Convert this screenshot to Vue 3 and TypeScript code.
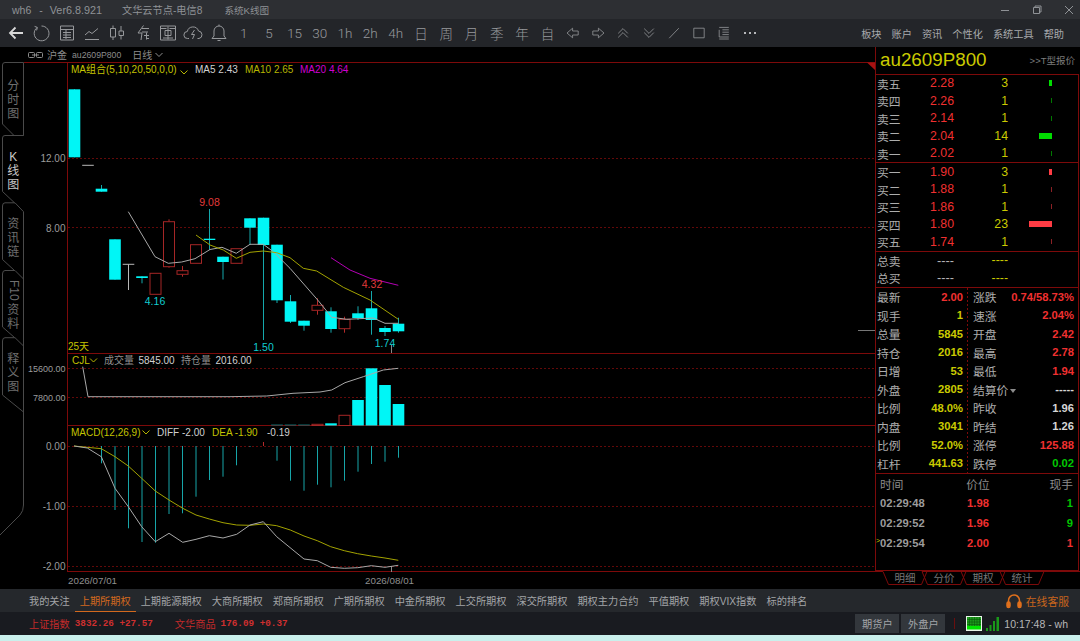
<script setup lang="ts">
type Candle = [number, number, number, number, 'c' | 'r' | 'g']

const step = 13.5
const cx = (i: number) => 74.5 + step * i

// top, bottom, high, low of each daily candle in chart pixels
const candles: Candle[] = [
  [89.3, 157.3, 89.3, 157.3, 'c'],
  [165.3, 165.3, 165.3, 165.3, 'g'],
  [188.7, 191.7, 185, 191.7, 'c'],
  [239.3, 279.7, 239.3, 279.7, 'c'],
  [264.3, 264.3, 264.3, 290, 'g'],
  [276.3, 278, 276.3, 283.3, 'c'],
  [273.3, 294.3, 273.3, 294.3, 'r'],
  [221.7, 266.7, 219.3, 267.7, 'r'],
  [270.7, 274.3, 266, 276.7, 'r'],
  [244.7, 263.3, 244.7, 263.3, 'r'],
  [238.7, 240, 209, 250, 'c'],
  [256.7, 262, 256.7, 279.5, 'c'],
  [248.7, 263.3, 248.7, 263.3, 'r'],
  [218.3, 227.7, 218.3, 245, 'c'],
  [217.7, 245, 217.7, 340, 'c'],
  [244.7, 300.3, 244.7, 303, 'c'],
  [301.3, 321.7, 295, 323, 'c'],
  [320.7, 325.7, 320.7, 330.7, 'c'],
  [305.3, 310.3, 298.3, 314.7, 'r'],
  [311.3, 329, 307.3, 332.7, 'c'],
  [319.3, 328.7, 316.7, 332.7, 'r'],
  [313.3, 318, 306.3, 320, 'c'],
  [308.3, 320, 291, 334.7, 'c'],
  [328, 332, 326, 336, 'c'],
  [323.7, 331.3, 317.7, 332.7, 'c'],
]

const ma5 = '128.3,211.7 155,256.7 168.3,263.3 181.7,262 195,258.7 210,249.5 222,247.3 236.3,253.3 250,244.3 263.3,244.3 273.3,251.7 290,268.3 318.3,300.7 331.7,317.3 346.7,319.3 373.3,318 385,323.3 398.3,323.3'
const ma10 = '196,235 210,245 223.3,250 236.3,258.3 250,252.3 263.3,251 276.7,252.7 290,257.7 303.3,268.3 316.7,271 343.3,287.3 370,300 398.3,319.3'
const ma20 = '331,257.7 350,270 370,278.3 398.3,285.3'
const volLine = '82.7,366.7 88,396.7 230,396.7 266.7,396 293,393.3 320,392 331.7,390 345,382.7 363.3,376.7 383.3,370 398.3,368.3'
const diff = '74,446 87.3,448 101.3,456.7 115,488.3 128.3,506.7 141.7,526.7 155.3,541.7 169,533.3 182.7,542.3 196,539.3 209.3,535.7 223,538 236.7,534.3 250,525 263.3,521.7 276.7,536.7 304,559 317.3,560.7 330.7,567.3 344.3,568.3 357.7,567.7 371.3,565.7 385,567.3 398.3,565.3'
const dea = '74,446 101.3,448.7 115,456.7 128.3,466 141.7,478.3 155.3,491 169,500 182.7,508.3 196,515 209.3,519 223,522.7 236.7,525 250,525.3 263.3,524 276.7,525.7 290.3,530 304,536 317.3,540.7 330.7,546.7 344.3,550.7 357.7,553.7 371.3,556 385,558 398.3,560.3'

const volBars: { i: number; top: number; kind: 'c' | 'r' | 't' }[] = [
  { i: 15, top: 424.5, kind: 't' },
  { i: 16, top: 424.5, kind: 't' },
  { i: 17, top: 424.5, kind: 't' },
  { i: 18, top: 424.3, kind: 'r' },
  { i: 19, top: 423.3, kind: 'c' },
  { i: 20, top: 415.3, kind: 'r' },
  { i: 21, top: 400, kind: 'c' },
  { i: 22, top: 368.3, kind: 'c' },
  { i: 23, top: 385, kind: 'c' },
  { i: 24, top: 404, kind: 'c' },
]

// bottom end of each MACD stick, first one sits at candle index 2
const macd = [463.3, 510, 528.3, 542, 542.7, 514, 513.3, 496.7, 480, 476.7, 465.3, 446.9, 442, 460.7, 480.7, 490.7, 484.7, 487.3, 480.7, 471.7, 464, 461.7, 457.7]

const toolIcons = [
  'M17 10H4M9.5 4.5 4 10l5.5 5.5',
  'M6 4.6A7.4 7.4 0 1 0 10.5 3M3.6 3.4 6.4 4.4 5.6 7.4',
  'M3.5 3h13v14h-13zM3.5 6.5h13M6 9.5h8M6 12h8M6 14.5h8M9 7v9',
  'M3 16.5h14M3 12l4-3.5 3 2 6-5',
  'M6 2.5v3M6 14v3M3.5 5.5h5V14h-5zM14 3v5M14 12.5v4M12 8h4.5v4.5H12z',
  'M10.5 2.5 5 10h4l-1 7M9 5.5h7M9 9h6M11 12.5h5M13 15.5h3M13.5 9.5v7',
  'M2.5 3h15v14h-15zM2.5 5.5h6M11.5 5.5h6M10 3.5v13M7 7.5h6v5H7zM5 15h10',
  'M6 15.5H4.5A3.5 3.5 0 0 1 4.3 8.5 5.8 5.8 0 0 1 15.5 8a3.8 3.8 0 0 1 .5 7.5h-1.5M11.5 7 8.5 11.5h3l-2 4.5',
  'M10 3a5 5 0 0 1 5 5v5l2 2.5H3L5 13V8a5 5 0 0 1 5-5zM8.5 17.5h3M10 1.5V3',
]
const toolTexts = ['1', '5', '15', '30', '1h', '2h', '4h', '日', '周', '月', '季', '年', '自']
const toolIcons2 = [
  'M2.5 10 9.5 4v3.5h7v5h-7V16z',
  'M17.5 10 10.5 4v3.5h-7v5h7V16z',
  'M4 10.5 10 4.5l6 6M4 15.5l6-6 6 6',
  'M4 4.5l6 6 6-6M4 9.5l6 6 6-6',
  'M4 16.5 16 4',
  'M3.5 4h13v12h-13z',
  'M4 3h12M8 6h8M8 9h8M8 12h8M4 15h12M4 17.5h12M4 6v9',
]
const menus = ['板块', '账户', '资讯', '个性化', '系统工具', '帮助']

const railTabs = [
  { label: ['分', '时', '图'], h: 74 },
  { label: ['K', '线', '图'], h: 67, active: true },
  { label: ['资', '讯', '链'], h: 67.5 },
  { label: ['F10', '资', '料'], h: 67.5, turned: true },
  { label: ['释', '义', '图'], h: 68 },
]

const asks = [
  ['卖五', '2.28', '3', 3, 6],
  ['卖四', '2.26', '1', 1, 5],
  ['卖三', '2.14', '1', 1, 5],
  ['卖二', '2.04', '14', 13.5, 6],
  ['卖一', '2.02', '1', 1, 5],
] as const
const bids = [
  ['买一', '1.90', '3', 3, 6],
  ['买二', '1.88', '1', 1, 5],
  ['买三', '1.86', '1', 1, 5],
  ['买四', '1.80', '23', 23, 6],
  ['买五', '1.74', '1', 1, 5],
] as const

const stats = [
  ['最新', '2.00', 'red', '涨跌', '0.74/58.73%', 'red'],
  ['现手', '1', 'yel', '速涨', '2.04%', 'red'],
  ['总量', '5845', 'yel', '开盘', '2.42', 'red'],
  ['持仓', '2016', 'yel', '最高', '2.78', 'red'],
  ['日增', '53', 'yel', '最低', '1.94', 'red'],
  ['外盘', '2805', 'yel', '结算价', '-----', 'wht'],
  ['比例', '48.0%', 'yel', '昨收', '1.96', 'wht'],
  ['内盘', '3041', 'yel', '昨结', '1.26', 'wht'],
  ['比例', '52.0%', 'yel', '涨停', '125.88', 'red'],
  ['杠杆', '441.63', 'yel', '跌停', '0.02', 'grn'],
]

const trades = [
  { time: '02:29:48', price: '1.98', hand: '1', cls: 'grn' },
  { time: '02:29:52', price: '1.96', hand: '9', cls: 'grn' },
  { time: '02:29:54', price: '2.00', hand: '1', cls: 'red', now: true },
]

const miniTabs = [
  { x: 883, label: '明细', active: true },
  { x: 922, label: '分价' },
  { x: 961, label: '期权' },
  { x: 1000, label: '统计' },
]

const bottomTabs = ['我的关注', '上期所期权', '上期能源期权', '大商所期权', '郑商所期权', '广期所期权', '中金所期权', '上交所期权', '深交所期权', '期权主力合约', '平值期权', '期权VIX指数', '标的排名']
</script>

<template>
  <div class="app">
    <header class="titlebar">
      <span class="t-name">wh6</span>
      <span class="t-dash">-</span>
      <span class="t-ver">Ver6.8.921</span>
      <span class="t-node">文华云节点-电信8</span>
      <span class="t-page">系统K线图</span>
      <div class="win">
        <svg width="10" height="10" viewBox="0 0 10 10"><path d="M1 5.5h8" /></svg>
        <svg width="10" height="10" viewBox="0 0 10 10"><path d="M1.5 2.5h6v6h-6zM3 2.5V1h6v6H7.5" /></svg>
        <svg width="10" height="10" viewBox="0 0 10 10"><path d="M1 1l8 8M9 1l-8 8" /></svg>
      </div>
    </header>

    <nav class="toolbar">
      <span v-for="(d, i) in toolIcons" :key="'a' + i" class="tool">
        <svg width="20" height="20" viewBox="0 0 20 20"><path :d="d" /></svg>
      </span>
      <span v-for="t in toolTexts" :key="t" class="tool tool-text">{{ t }}</span>
      <span v-for="(d, i) in toolIcons2" :key="'b' + i" class="tool small">
        <svg width="16" height="16" viewBox="0 0 20 20"><path :d="d" /></svg>
      </span>
      <span class="tool dots"><i /><i /><i /></span>
      <div class="menus">
        <span v-for="m in menus" :key="m">{{ m }}</span>
      </div>
    </nav>

    <div class="body">
      <div class="left">
        <div class="subhead">
          <svg width="15" height="8" viewBox="0 0 15 8" class="link">
            <rect x="0.5" y="1.5" width="6" height="5" rx="1" />
            <rect x="8.5" y="1.5" width="6" height="5" rx="1" />
            <path d="M4 4h7" />
          </svg>
          <span class="sub-ex">沪金</span>
          <span class="sub-code">au2609P800</span>
          <span class="sub-period">日线</span>
          <svg width="8" height="6" viewBox="0 0 8 6" class="chev"><path d="M.5 1 4 4.5 7.5 1" /></svg>
        </div>

        <div class="chart-row">
          <aside class="rail">
            <svg class="rail-lines" width="24" height="527" viewBox="0 62 24 527">
              <path d="M2.5 65Q2.5 62.5 5 62.5H23.5V135.5H14L2.5 124V65" />
              <path d="M23.5 135.5H5Q2.5 135.5 2.5 138V191.5L14.5 202.8" />
              <path d="M2.5 259.5V206Q2.5 202.8 5 202.8H15L23.5 211.7V505Q23.5 511 20 515L0 535" />
              <path d="M2.5 259.5 14.5 270.5M2.5 327V274Q2.5 270.5 5 270.5H15L23.5 279" />
              <path d="M2.5 327 14.5 337.5M2.5 395V341Q2.5 337.7 5 337.7H15L23.5 346M2.5 395 23.5 412" />
            </svg>
            <div
              v-for="tab in railTabs"
              :key="tab.label.join('')"
              class="rail-tab"
              :class="{ active: tab.active }"
              :style="{ height: tab.h + 'px' }"
            >
              <span
                v-for="(c, i) in tab.label"
                :key="i"
                :class="{ turned: tab.turned && i === 0 }"
              >{{ c }}</span>
            </div>
          </aside>

          <svg class="chart" width="851" height="527" viewBox="24 62 851 527">
            <!-- grid -->
            <g class="dash">
              <path d="M68 158.5H875M68 227.5H875M68 368.5H875M68 397.5H875M68 446.5H875M68 506.5H875M68 566.5H875" />
            </g>
            <g class="frame">
              <path d="M24 62.5H875M67.5 62V572M68 353.5H875M68 425.5H875M68 571.5H875" />
            </g>
            <path d="M867 62.5H875V70z" fill="#a81212" />
            <path d="M858 330.5H875" stroke="#777" fill="none" />

            <!-- price panel -->
            <g v-for="(c, i) in candles" :key="i">
              <template v-if="c[4] === 'c'">
                <path :d="`M${cx(i)} ${c[2]}V${c[3]}`" class="wick" />
                <rect :x="cx(i) - 5.8" :y="c[0]" width="11.6" :height="Math.max(c[1] - c[0], 1)" fill="#00f6f6" />
              </template>
              <template v-else-if="c[4] === 'r'">
                <path :d="`M${cx(i)} ${c[2]}V${c[0]}M${cx(i)} ${c[1]}V${c[3]}`" class="wick-red" />
                <rect :x="cx(i) - 5.5" :y="c[0]" width="11" :height="c[1] - c[0]" class="hollow" />
              </template>
              <template v-else>
                <path :d="`M${cx(i) - 5.8} ${c[0]}H${cx(i) + 5.8}M${cx(i)} ${c[0]}V${c[3]}`" class="wick-gray" />
              </template>
            </g>
            <polyline :points="ma5" class="line gray" />
            <polyline :points="ma10" class="line olive" />
            <polyline :points="ma20" class="line magenta" />
            <path d="M391.5 345V353M391.5 566V572" stroke="#888" fill="none" />

            <text x="155" y="305" class="lbl mid cyan">4.16</text>
            <text x="209.5" y="206" class="lbl mid red">9.08</text>
            <text x="263.5" y="351" class="lbl mid cyan">1.50</text>
            <text x="372" y="288" class="lbl mid red">4.32</text>
            <text x="385" y="346.5" class="lbl mid cyan">1.74</text>
            <text x="68" y="349.5" class="lbl yellow">25天</text>

            <text x="71" y="73" class="lbl yellow">MA组合(5,10,20,50,0,0)</text>
            <path d="M180.5 70.5 184 74 187.5 70.5" class="chev-line" />
            <text x="195" y="73" class="lbl white">MA5 2.43</text>
            <text x="245" y="73" class="lbl olive-t">MA10 2.65</text>
            <text x="300" y="73" class="lbl magenta-t">MA20 4.64</text>

            <!-- axis -->
            <text x="65.5" y="162" class="axis">12.00</text>
            <text x="65.5" y="231.5" class="axis">8.00</text>
            <text x="65.5" y="371.5" class="axis sm">15600.00</text>
            <text x="65.5" y="400.5" class="axis sm">7800.00</text>
            <text x="65.5" y="450" class="axis">0.00</text>
            <text x="65.5" y="510" class="axis">-1.00</text>
            <text x="65.5" y="570" class="axis">-2.00</text>

            <!-- volume panel -->
            <text x="72" y="364" class="lbl yellow">CJL</text>
            <path d="M90 358.5 93.5 362 97 358.5" class="chev-line" />
            <text x="104" y="364" class="lbl dim">成交量</text>
            <text x="138.5" y="364" class="lbl white">5845.00</text>
            <text x="181" y="364" class="lbl dim">持仓量</text>
            <text x="215.5" y="364" class="lbl white">2016.00</text>
            <g v-for="b in volBars" :key="b.i">
              <rect
                v-if="b.kind === 'r'"
                :x="cx(b.i) - 5.5"
                :y="b.top"
                width="11"
                :height="425.5 - b.top"
                class="hollow"
              />
              <rect
                v-else
                :x="cx(b.i) - 5.8"
                :y="b.top"
                width="11.6"
                :height="425.5 - b.top"
                :fill="b.kind === 'c' ? '#00f6f6' : '#0e6f70'"
              />
            </g>
            <polyline :points="volLine" class="line gray" />

            <!-- macd panel -->
            <text x="71" y="436" class="lbl yellow">MACD(12,26,9)</text>
            <path d="M142.5 430.5 146 434 149.5 430.5" class="chev-line" />
            <text x="157" y="436" class="lbl white">DIFF -2.00</text>
            <text x="212" y="436" class="lbl yellow">DEA -1.90</text>
            <text x="267" y="436" class="lbl white">-0.19</text>
            <path
              v-for="(y, i) in macd"
              :key="i"
              :d="`M${cx(i + 2)} 446V${y}`"
              :class="y < 446 ? 'stick-red' : 'stick'"
            />
            <polyline :points="dea" class="line olive" />
            <polyline :points="diff" class="line gray" />

            <text x="68" y="584" class="lbl dim date">2026/07/01</text>
            <text x="365" y="584" class="lbl dim date">2026/08/01</text>
          </svg>
        </div>
      </div>

      <aside class="quote">
        <div class="q-title">
          <span class="q-code">au2609P800</span>
          <span class="q-link">&gt;&gt;T型报价</span>
        </div>

        <div class="q-box">
          <section class="book">
            <div v-for="r in asks" :key="r[0]" class="b-row">
              <span class="lab">{{ r[0] }}</span>
              <span class="b-price">{{ r[1] }}</span>
              <span class="b-qty">{{ r[2] }}</span>
              <span class="b-bar"><i class="bar-g" :class="{ thin: r[3] === 1 }" :style="{ width: r[3] + 'px', height: r[4] + 'px' }" /></span>
            </div>
          </section>
          <section class="book">
            <div v-for="r in bids" :key="r[0]" class="b-row">
              <span class="lab">{{ r[0] }}</span>
              <span class="b-price">{{ r[1] }}</span>
              <span class="b-qty">{{ r[2] }}</span>
              <span class="b-bar"><i class="bar-r" :class="{ thin: r[3] === 1 }" :style="{ width: r[3] + 'px', height: r[4] + 'px' }" /></span>
            </div>
          </section>
          <section class="book totals">
            <div class="b-row">
              <span class="lab">总卖</span><span class="b-price gr">----</span><span class="b-qty">----</span>
            </div>
            <div class="b-row">
              <span class="lab">总买</span><span class="b-price gr">----</span><span class="b-qty">----</span>
            </div>
          </section>

          <section class="stats">
            <div v-for="(s, i) in stats" :key="i" class="s-row">
              <div class="s-cell s-left">
                <span class="lab">{{ s[0] }}</span>
                <b :class="s[2]">{{ s[1] }}</b>
              </div>
              <div class="s-cell s-right">
                <span class="lab">{{ s[3] }}<i v-if="s[3] === '结算价'" class="caret" /></span>
                <b :class="s[5]">{{ s[4] }}</b>
              </div>
            </div>
          </section>

          <section class="trades">
            <div class="t-row t-head">
              <span>时间</span><span class="t-mid">价位</span><span class="t-end">现手</span>
            </div>
            <div v-for="t in trades" :key="t.time" class="t-row">
              <b class="t-time"><i v-if="t.now" class="now">&gt;</i>{{ t.time }}</b>
              <b class="t-mid red">{{ t.price }}</b>
              <b class="t-end" :class="t.cls">{{ t.hand }}</b>
            </div>
          </section>
        </div>

        <svg class="mini" width="205" height="15" viewBox="875 571 205 15">
          <path d="M875 571.5H883M1043 571.5H1080" class="mini-line" />
          <g v-for="m in miniTabs" :key="m.x">
            <path
              :d="`M${m.x} 571.5L${m.x + 5.5} 584.5H${m.x + 38.5}L${m.x + 44} 571.5${m.active ? '' : 'Z'}`"
              class="mini-line"
            />
            <text :x="m.x + 22" y="582" class="mini-text">{{ m.label }}</text>
          </g>
        </svg>
      </aside>
    </div>

    <div class="tabbar">
      <span v-for="(t, i) in bottomTabs" :key="t" class="bt" :class="{ on: i === 1 }">{{ t }}</span>
      <div class="service">
        <svg width="16" height="16" viewBox="0 0 16 16">
          <path d="M2.5 10V7.5a5.5 5.5 0 0 1 11 0V10" fill="none" />
          <rect x="1" y="9" width="3" height="5.5" rx="1.5" />
          <rect x="12" y="9" width="3" height="5.5" rx="1.5" />
        </svg>
        <span>在线客服</span>
      </div>
    </div>

    <footer class="status">
      <span class="idx">上证指数</span>
      <span class="num">3832.26 +27.57</span>
      <span class="idx idx2">文华商品</span>
      <span class="num">176.09 +0.37</span>
      <div class="st-right">
        <span class="acct">期货户</span>
        <span class="acct">外盘户</span>
        <i class="st-sep" />
        <svg width="16" height="15" viewBox="0 0 16 15" class="net">
          <rect width="16" height="15" fill="#e8f5e8" />
          <rect x="1" y="1" width="14" height="9" fill="#1c9a1c" />
          <path d="M1 3.5h14M1 6h14M1 8.5h14M3.5 1v9M6 1v9M8.5 1v9M11 1v9M13.5 1v9" stroke="#0a5a0a" stroke-width=".6" />
          <rect x="1" y="10" width="14" height="3.5" fill="#00e600" />
        </svg>
        <svg width="13" height="14" viewBox="0 0 13 14" class="signal">
          <rect x="0" y="11" width="2" height="3" fill="#1a9a1a" />
          <rect x="3.5" y="8" width="2" height="6" fill="#1a9a1a" />
          <rect x="7" y="4" width="2" height="10" fill="#1a9a1a" />
          <rect x="10.5" y="0" width="2.5" height="14" fill="#1a9a1a" />
        </svg>
        <span class="clock">10:17:48 - wh</span>
      </div>
    </footer>
    <div class="strip" />
  </div>
</template>

<style>
html,
body {
  margin: 0;
  background: #000;
  overflow: hidden;
}
</style>

<style scoped>
.app {
  width: 1080px;
  height: 641px;
  display: flex;
  flex-direction: column;
  overflow: hidden;
  background: #000;
  font-family: "Liberation Sans", "Noto Sans CJK SC", sans-serif;
  color: #aaa;
}

/* title bar */
.titlebar {
  height: 19px;
  flex: none;
  display: flex;
  align-items: center;
  background: #2d2f33;
  color: #8f9296;
  font-size: 10.5px;
  padding-left: 12px;
}
.t-dash {
  margin-left: 8px;
}
.t-ver {
  margin-left: 7px;
  font-size: 10.8px;
}
.t-node {
  margin-left: 20px;
  font-size: 10.2px;
}
.t-page {
  margin-left: 22px;
  font-size: 9.6px;
}
.win {
  margin-left: auto;
  display: flex;
  gap: 22px;
  padding-right: 6px;
}
.win svg {
  fill: none;
  stroke: #8f9296;
  stroke-width: 1;
}

/* toolbar */
.toolbar {
  height: 28px;
  flex: none;
  display: flex;
  align-items: center;
  background: #232529;
  padding-left: 3.5px;
}
.tool {
  width: 25.3px;
  flex: none;
  display: flex;
  justify-content: center;
  align-items: center;
}
.tool svg {
  fill: none;
  stroke: #96989b;
  stroke-width: 1;
}
.tool:first-child svg {
  stroke: #d8d8d8;
  stroke-width: 1.8;
}
.tool-text {
  font-family: Roboto, "Noto Sans CJK SC", sans-serif;
  font-size: 13.5px;
  font-weight: 300;
  color: #989a9d;
}
.dots {
  gap: 2.5px;
}
.dots i {
  width: 2.5px;
  height: 2.5px;
  background: #b5b7ba;
}
.menus {
  margin-left: auto;
  display: flex;
  gap: 10px;
  padding-right: 16px;
  font-size: 10.2px;
  color: #a8aaad;
}

/* body */
.body {
  height: 542px;
  flex: none;
  display: flex;
  background: #000;
}
.left {
  width: 875px;
  flex: none;
}
.subhead {
  height: 15px;
  display: flex;
  align-items: center;
  padding-left: 28px;
  font-size: 10px;
  color: #8c8c8c;
}
.link {
  fill: none;
  stroke: #8c8c8c;
}
.sub-ex {
  margin-left: 4px;
}
.sub-code {
  margin-left: 5px;
  font-size: 8.7px;
}
.sub-period {
  margin-left: 11px;
}
.chev {
  margin-left: 3px;
  fill: none;
  stroke: #8c8c8c;
}
.chart-row {
  display: flex;
  height: 527px;
}
.rail {
  width: 24px;
  flex: none;
  position: relative;
  padding-left: 2.6px;
  box-sizing: border-box;
}
.rail-lines {
  position: absolute;
  left: 0;
  top: 0;
  fill: none;
  stroke: #4a4a4a;
}
.rail-tab {
  display: flex;
  flex-direction: column;
  align-items: center;
  justify-content: center;
  padding-top: 2px;
  font-size: 12px;
  line-height: 14px;
  color: #6f6f6f;
  box-sizing: border-box;
}
.rail-tab.active {
  color: #c8c8c8;
}
.turned {
  writing-mode: vertical-rl;
  line-height: 13px;
  margin-bottom: 2px;
}
.chart {
  display: block;
  flex: none;
  font-family: "Liberation Sans", "Noto Sans CJK SC", sans-serif;
}
.dash path {
  fill: none;
  stroke: #620909;
  stroke-dasharray: 2 2;
}
.frame path {
  fill: none;
  stroke: #7d0a0a;
}
.wick {
  stroke: #15a8ac;
  fill: none;
}
.wick-red {
  stroke: #b52a2a;
  fill: none;
}
.wick-gray {
  stroke: #b8b8b8;
  fill: none;
}
.hollow {
  fill: #000;
  stroke: #a52626;
}
.line {
  fill: none;
  stroke-width: 1;
}
.gray {
  stroke: #a8a8a8;
}
.olive {
  stroke: #a3a300;
}
.magenta {
  stroke: #b400b4;
}
.stick {
  stroke: #17a5a8;
  fill: none;
}
.stick-red {
  stroke: #b52a2a;
  fill: none;
}
.lbl {
  font-size: 10px;
}
.mid {
  text-anchor: middle;
  font-size: 10.5px;
}
.cyan {
  fill: #11cdd0;
}
.lbl.red {
  fill: #e03a3a;
}
.yellow {
  fill: #c4c400;
}
.white {
  fill: #d0d0d0;
}
.dim {
  fill: #8f8f8f;
}
.olive-t {
  fill: #b5b500;
}
.magenta-t {
  fill: #d000d0;
}
.date {
  font-size: 9.8px;
}
.chev-line {
  fill: none;
  stroke: #b5b500;
}
.axis {
  font-size: 10px;
  fill: #9c9c9c;
  text-anchor: end;
}
.axis.sm {
  font-size: 9px;
}

/* quote panel */
.quote {
  width: 205px;
  flex: none;
  box-sizing: border-box;
}
.q-title {
  height: 26.5px;
  display: flex;
  align-items: center;
  justify-content: space-between;
  box-sizing: border-box;
  padding: 0 5px 0 4px;
  border-left: 1px solid #7d0a0a;
}
.q-code {
  font-size: 18.8px;
  color: #caca00;
}
.q-link {
  font-size: 9.5px;
  color: #7c7c7c;
}
.q-box {
  height: 497.5px;
  box-sizing: border-box;
  border: 1px solid #7d0a0a;
  margin-right: 1px;
}
.book {
  border-bottom: 1px solid #7d0a0a;
  padding-left: 1px;
}
.totals {
  height: 36.5px;
  box-sizing: border-box;
}
.b-row {
  height: 17.5px;
  box-sizing: border-box;
  padding-bottom: 1px;
  display: grid;
  grid-template-columns: 53px 24px 54px 44px;
  align-items: center;
  font-size: 12.3px;
}
.lab {
  font-size: 11.8px;
  color: #adadad;
  white-space: nowrap;
}
.b-price {
  color: #f03030;
  text-align: right;
}
.b-price.gr {
  color: #b5b5b5;
  font-size: 12.8px;
}
.b-qty {
  color: #caca00;
  text-align: right;
}
.b-bar {
  display: flex;
  justify-content: flex-end;
  align-items: center;
}
.bar-g {
  background: #00dc00;
}
.bar-r {
  background: #ff3c44;
}
.thin {
  opacity: 0.55;
}
.stats {
  border-bottom: 1px solid #7d0a0a;
  background: repeating-linear-gradient(to bottom, #7d0a0a 0 2px, transparent 2px 4px) 91px 0 / 1px 100% no-repeat;
}
.s-row {
  height: 18.5px;
  box-sizing: border-box;
  padding-bottom: 2px;
  display: grid;
  grid-template-columns: 92px 111px;
}
.s-cell {
  display: flex;
  justify-content: space-between;
  align-items: center;
  box-sizing: border-box;
}
.s-cell b {
  font-size: 11.2px;
}
.s-left {
  padding: 0 5px 0 1px;
}
.s-right {
  padding: 0 5px;
}
.caret {
  display: inline-block;
  margin-left: 2px;
  vertical-align: middle;
  border: 3.5px solid transparent;
  border-top: 4px solid #8c8c8c;
  border-bottom: 0;
}
.red {
  color: #f03030;
}
.yel {
  color: #caca00;
}
.wht {
  color: #d6d6d6;
}
.grn {
  color: #00c800;
}
.t-row {
  height: 20.3px;
  box-sizing: border-box;
  padding-bottom: 2px;
  display: grid;
  grid-template-columns: 77px 42px 74px;
  align-items: center;
  padding-left: 4px;
  position: relative;
}
.t-row b {
  font-size: 11.2px;
}
.t-head {
  height: 19.5px;
  padding-bottom: 0;
  font-size: 11.7px;
  color: #8c8c8c;
}
.t-mid {
  text-align: center;
}
.t-end {
  text-align: right;
}
.t-time {
  color: #9c9c9c;
}
.now {
  position: absolute;
  left: 0;
  top: 3px;
  font-size: 7px;
  font-style: normal;
  font-weight: 400;
  color: #caca00;
}
.mini {
  display: block;
}
.mini-line {
  fill: none;
  stroke: #7d0a0a;
}
.mini-text {
  font-size: 10.5px;
  fill: #767676;
  text-anchor: middle;
}

/* bottom bars */
.tabbar {
  height: 23px;
  flex: none;
  display: flex;
  align-items: stretch;
  background: #25282c;
  padding-left: 24px;
  box-sizing: border-box;
}
.bt {
  padding: 0 5px;
  font-size: 10.2px;
  color: #a3a5a8;
  display: flex;
  align-items: center;
  box-sizing: border-box;
  border-bottom: 1px solid transparent;
}
.bt.on {
  color: #d2691e;
  border-bottom-color: #d2691e;
}
.service {
  margin-left: auto;
  display: flex;
  align-items: center;
  gap: 4px;
  padding-right: 11px;
  font-size: 10.8px;
  color: #c8651c;
}
.service svg {
  stroke: #e0701c;
  stroke-width: 1.5;
  fill: #e0701c;
}
.service svg path {
  fill: none;
}
.status {
  height: 23px;
  flex: none;
  display: flex;
  align-items: center;
  padding-left: 29px;
  background: #191b20;
  font-size: 10.2px;
}
.idx {
  color: #c22a2a;
}
.idx2 {
  margin-left: 22px;
}
.num {
  margin-left: 5px;
  font-family: "Liberation Mono", monospace;
  font-size: 9.3px;
  font-weight: 700;
  color: #cf2f2f;
  white-space: nowrap;
}
.st-right {
  margin-left: auto;
  display: flex;
  align-items: center;
  padding-right: 12px;
}
.acct {
  width: 44px;
  height: 19px;
  display: flex;
  align-items: center;
  justify-content: center;
  background: #33373c;
  color: #a3a5a8;
  margin-right: 2px;
}
.st-sep {
  width: 1px;
  height: 11px;
  margin: 0 11px 0 7px;
  background: #6a0f0f;
}
.signal {
  margin-left: 4px;
}
.clock {
  margin-left: 5px;
  color: #b8b8b8;
  font-size: 10.5px;
  white-space: nowrap;
}
.strip {
  flex: 1;
  background: #c9f0ec;
}
</style>
